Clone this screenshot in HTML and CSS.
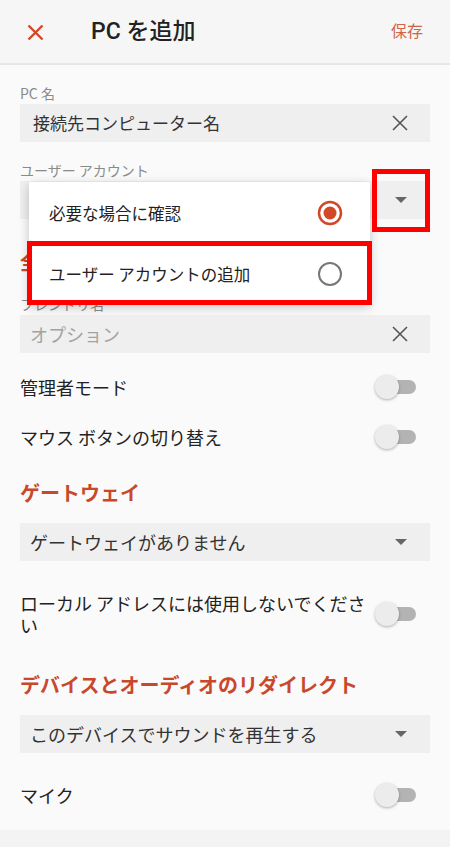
FILE: index.html
```html
<!DOCTYPE html>
<html lang="ja">
<head>
<meta charset="utf-8">
<title>PC を追加</title>
<link rel="stylesheet" href="styles.css">
</head>
<body>
<div class="app">
  <header class="topbar">
    <svg class="close" width="17" height="17" viewBox="0 0 17 17"><path d="M1.5 1.5L15.5 15.5M15.5 1.5L1.5 15.5" stroke="#d24726" stroke-width="2.4" fill="none"/></svg>
    <h1 class="title">PC を追加</h1>
    <span class="save">保存</span>
  </header>
  <main class="content">
    <div class="label">PC 名</div>
    <div class="field">
      <span class="value value-name">接続先コンピューター名</span>
      <svg class="clear" width="16" height="16" viewBox="0 0 16 16"><path d="M1 1L15 15M15 1L1 15" stroke="#555" stroke-width="1.6" fill="none"/></svg>
    </div>
    <div class="label">ユーザー アカウント</div>
    <div class="field select">
      <span class="value"></span>
      <span class="arrow"></span>
    </div>
    <h2 class="section section-after-field">全般</h2>
    <div class="label">フレンドリ名</div>
    <div class="field">
      <span class="value placeholder">オプション</span>
      <svg class="clear" width="16" height="16" viewBox="0 0 16 16"><path d="M1 1L15 15M15 1L1 15" stroke="#555" stroke-width="1.6" fill="none"/></svg>
    </div>
    <div class="row row-after-field">
      <span class="row-text">管理者モード</span>
      <span class="toggle"></span>
    </div>
    <div class="row">
      <span class="row-text">マウス ボタンの切り替え</span>
      <span class="toggle"></span>
    </div>
    <h2 class="section">ゲートウェイ</h2>
    <div class="field select">
      <span class="value">ゲートウェイがありません</span>
      <span class="arrow"></span>
    </div>
    <div class="row row-after-select row-multi">
      <span class="row-text">ローカル アドレスには使用しないでください</span>
      <span class="toggle"></span>
    </div>
    <h2 class="section">デバイスとオーディオのリダイレクト</h2>
    <div class="field select">
      <span class="value">このデバイスでサウンドを再生する</span>
      <span class="arrow"></span>
    </div>
    <div class="row row-after-select">
      <span class="row-text">マイク</span>
      <span class="toggle"></span>
    </div>
  </main>
  <div class="bottom-band"></div>

  <div class="menu">
    <div class="menu-item">
      <span class="menu-text">必要な場合に確認</span>
      <svg class="radio" width="26" height="26" viewBox="0 0 26 26"><circle cx="13" cy="13" r="11" stroke="#d24726" stroke-width="2.5" fill="none"/><circle cx="13" cy="13" r="6.5" fill="#d24726"/></svg>
    </div>
    <div class="menu-item">
      <span class="menu-text">ユーザー アカウントの追加</span>
      <svg class="radio" width="26" height="26" viewBox="0 0 26 26"><circle cx="13" cy="13" r="11" stroke="#777" stroke-width="2" fill="none"/></svg>
    </div>
  </div>
  <div class="highlight hl-arrow"></div>
  <div class="highlight hl-item"></div>
</div>
</body>
</html>
```

FILE: styles.css
```css
* { box-sizing: border-box; }
html, body { margin: 0; padding: 0; }
body {
  width: 450px;
  height: 847px;
  overflow: hidden;
  background: #fafafa;
  font-family: Roboto, "Noto Sans CJK JP", sans-serif;
  color: #222;
}
.app {
  position: relative;
  width: 450px;
  height: 847px;
  background: #fafafa;
}
.topbar {
  height: 65px;
  display: flex;
  align-items: center;
  background: #f6f6f6;
  border-bottom: 2px solid #e6e6e6;
  padding-top: 1px;
}
.close {
  display: block;
  margin-left: 27px;
  flex: none;
}
.title {
  margin: 0 0 0 47px;
  font-size: 23px;
  font-weight: 500;
  line-height: 28px;
  color: #222;
}
.save {
  margin-left: auto;
  margin-right: 27px;
  font-size: 16px;
  line-height: 22px;
  color: #d0654a;
}
.content {
  padding: 0 20px;
  font-family: "Noto Sans CJK JP", sans-serif;
}
.label {
  padding-top: 19px;
  margin-bottom: 2px;
  font-size: 14px;
  line-height: 18px;
  color: #8a8a8a;
}
.field {
  height: 38px;
  background: #efefef;
  display: flex;
  align-items: center;
  padding: 0 22px 0 10px;
}
.value {
  flex: 1;
  font-size: 18px;
  line-height: 24px;
  color: #333;
  white-space: nowrap;
}
.value-name { font-size: 17px; padding-left: 3px; }
.placeholder { color: #a2a2a2; }
.clear { display: block; flex: none; }
.select { padding-right: 23px; }
.arrow {
  flex: none;
  width: 0;
  height: 0;
  border-left: 6px solid transparent;
  border-right: 6px solid transparent;
  border-top: 6px solid #666;
}
.section {
  margin: 17px 0 0;
  font-size: 20px;
  font-weight: 700;
  line-height: 28px;
  color: #c9482b;
}
.section-after-field { margin-top: 29px; }
.section + .field { margin-top: 16px; }
.row {
  display: flex;
  align-items: center;
  gap: 4px;
  padding: 13px 14px 13px 0;
}
.row-after-field { margin-top: 9px; }
.row-after-select { margin-top: 17px; }
.row-multi { padding-top: 14px; padding-bottom: 18px; }
.row-text {
  flex: 1;
  font-size: 18px;
  line-height: 22px;
  color: #222;
}
.toggle {
  flex: none;
  position: relative;
  width: 41px;
  height: 24px;
}
.toggle::before {
  content: "";
  position: absolute;
  left: 8px;
  top: 5px;
  width: 33px;
  height: 14px;
  border-radius: 7px;
  background: #b3b3b3;
}
.toggle::after {
  content: "";
  position: absolute;
  left: 0;
  top: 0;
  width: 24px;
  height: 24px;
  border-radius: 50%;
  background: #ececec;
  box-shadow: 0 1px 3px rgba(0, 0, 0, 0.3);
}
.bottom-band {
  margin-top: 10px;
  height: 20px;
  background: #f3f3f3;
}
.menu {
  position: absolute;
  left: 29px;
  top: 182px;
  width: 341px;
  height: 122px;
  background: #fff;
  box-shadow: 0 3px 10px rgba(0, 0, 0, 0.22);
  font-family: "Noto Sans CJK JP", sans-serif;
}
.menu-item {
  height: 61px;
  display: flex;
  align-items: center;
  padding: 0 27px 0 20px;
}
.menu-text {
  flex: 1;
  font-size: 16.5px;
  line-height: 22px;
  color: #222;
}
.radio { display: block; flex: none; }
.highlight {
  position: absolute;
  border: 5px solid #f00;
}
.hl-arrow {
  left: 372px;
  top: 169px;
  width: 58px;
  height: 63px;
}
.hl-item {
  left: 27px;
  top: 241px;
  width: 345px;
  height: 64px;
}
```
